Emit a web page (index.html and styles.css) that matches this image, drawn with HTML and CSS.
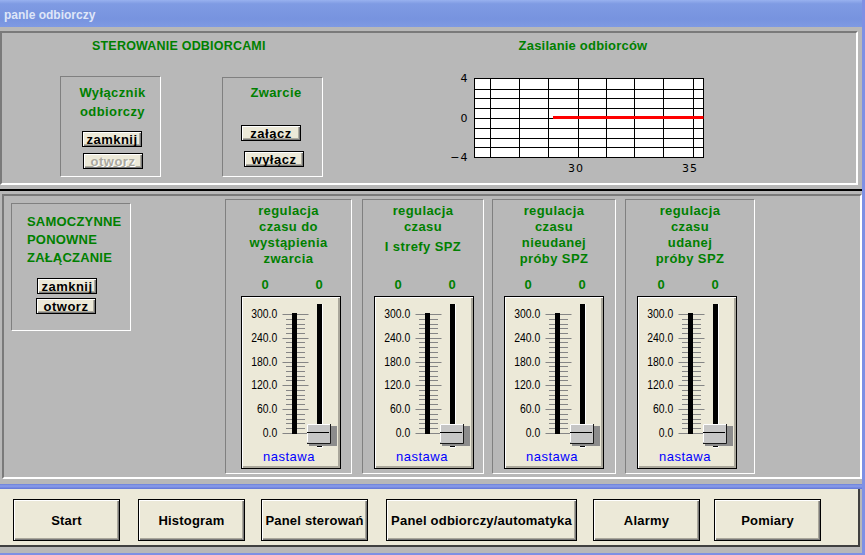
FILE: index.html
```html
<!DOCTYPE html>
<html lang="pl">
<head>
<meta charset="utf-8">
<title>panle odbiorczy</title>
<link rel="stylesheet" href="styles.css">
</head>
<body>
<svg class="defs" width="0" height="0" aria-hidden="true">
  <symbol id="scale" viewBox="0 0 62 152">
    <path d="M4.5 17.5H30.5M4.5 41.5H30.5M4.5 65.5H30.5M4.5 88.5H30.5M4.5 112.5H30.5M4.5 136.5H30.5" stroke="#858585" fill="none"/>
    <path d="M8 22.5H27M8 27.5H27M8 31.5H27M8 36.5H27M8 45.5H27M8 50.5H27M8 55.5H27M8 60.5H27M8 69.5H27M8 74.5H27M8 79.5H27M8 83.5H27M8 93.5H27M8 98.5H27M8 102.5H27M8 107.5H27M8 117.5H27M8 122.5H27M8 126.5H27M8 131.5H27" stroke="#858585" fill="none"/>
    <rect x="14" y="16" width="5" height="121" fill="#000"/>
    <rect x="39" y="7" width="5" height="143" fill="#000"/>
    <path d="M44.5 7V150.5H39" stroke="#fff" fill="none"/>
    <rect x="31" y="129" width="28" height="20" fill="#8c8c8c"/>
    <rect x="29" y="127" width="24" height="19" fill="#c6c6c6"/>
    <path d="M29.5 145V127.5H52" stroke="#fff" fill="none"/>
    <path d="M52.5 127V146.5H29" stroke="#1a1a1a" fill="none"/>
    <path d="M29 135.5H51" stroke="#000" fill="none"/>
  </symbol>
</svg>
<div class="window">
  <div class="titlebar">panle odbiorczy</div>

  <section class="panel panel-top">
    <div class="ctrl-area">
      <h1 class="heading">STEROWANIE ODBIORCAMI</h1>
      <div class="ctrl-boxes">
        <div class="group group-switch">
          <div class="label">Wyłącznik<br>odbiorczy</div>
          <button class="sbtn b-zamknij" type="button">zamknij</button>
          <button class="sbtn b-otworz" type="button" disabled>otworz</button>
        </div>
        <div class="group group-short">
          <div class="label">Zwarcie</div>
          <button class="sbtn b-zalacz" type="button">załącz</button>
          <button class="sbtn b-wylacz" type="button">wyłącz</button>
        </div>
      </div>
    </div>
    <div class="chart-area">
      <h2 class="chart-title">Zasilanie odbiorców</h2>
      <svg class="chart" width="270" height="110" viewBox="0 0 270 110">
        <rect x="24.5" y="10.5" width="229" height="79" fill="#fff" stroke="#000"/>
        <path d="M40.5 10.5V89.5M69.5 10.5V89.5M98.5 10.5V89.5M128.5 10.5V89.5M156.5 10.5V89.5M184.5 10.5V89.5M213.5 10.5V89.5M243.5 10.5V89.5" stroke="#000" fill="none"/>
        <path d="M24.5 21.5H253.5M24.5 30.5H253.5M24.5 40.5H253.5M24.5 50.5H253.5M24.5 60.5H253.5M24.5 70.5H253.5M24.5 79.5H253.5" stroke="#000" fill="none"/>
        <rect x="103" y="48" width="150.5" height="3" fill="#ff0000"/>
        <g class="axis">
          <text x="18.5" y="14" text-anchor="end">4</text>
          <text x="18.5" y="54" text-anchor="end">0</text>
          <text x="18.5" y="93" text-anchor="end">−4</text>
          <text x="126" y="104" text-anchor="middle">30</text>
          <text x="240" y="104" text-anchor="middle">35</text>
        </g>
      </svg>
    </div>
  </section>

  <div class="divider"></div>

  <section class="panel panel-bottom">
    <div class="group group-spz">
      <div class="label spz-label">SAMOCZYNNE<br>PONOWNE<br>ZAŁĄCZANIE</div>
      <button class="sbtn b-spz-zamknij" type="button">zamknij</button>
      <button class="sbtn b-spz-otworz" type="button">otworz</button>
    </div>

    <div class="sgroup">
      <div class="stitle"><span>regulacja</span><span>czasu do</span><span>wystąpienia</span><span>zwarcia</span></div>
      <div class="slider">
        <div class="readouts"><span>0</span><span>0</span></div>
        <div class="frame">
          <div class="scale-labels"><span>300.0</span><span>240.0</span><span>180.0</span><span>120.0</span><span>60.0</span><span>0.0</span></div>
          <svg class="scale" width="62" height="152"><use href="#scale"/></svg>
          <div class="nastawa">nastawa</div>
        </div>
      </div>
    </div>

    <div class="sgroup">
      <div class="stitle"><span>regulacja</span><span>czasu</span><span class="ln-gap">I strefy SPZ</span></div>
      <div class="slider">
        <div class="readouts"><span>0</span><span>0</span></div>
        <div class="frame">
          <div class="scale-labels"><span>300.0</span><span>240.0</span><span>180.0</span><span>120.0</span><span>60.0</span><span>0.0</span></div>
          <svg class="scale" width="62" height="152"><use href="#scale"/></svg>
          <div class="nastawa">nastawa</div>
        </div>
      </div>
    </div>

    <div class="sgroup">
      <div class="stitle"><span>regulacja</span><span>czasu</span><span>nieudanej</span><span>próby SPZ</span></div>
      <div class="slider">
        <div class="readouts"><span>0</span><span>0</span></div>
        <div class="frame">
          <div class="scale-labels"><span>300.0</span><span>240.0</span><span>180.0</span><span>120.0</span><span>60.0</span><span>0.0</span></div>
          <svg class="scale" width="62" height="152"><use href="#scale"/></svg>
          <div class="nastawa">nastawa</div>
        </div>
      </div>
    </div>

    <div class="sgroup">
      <div class="stitle"><span>regulacja</span><span>czasu</span><span>udanej</span><span>próby SPZ</span></div>
      <div class="slider">
        <div class="readouts"><span>0</span><span>0</span></div>
        <div class="frame">
          <div class="scale-labels"><span>300.0</span><span>240.0</span><span>180.0</span><span>120.0</span><span>60.0</span><span>0.0</span></div>
          <svg class="scale" width="62" height="152"><use href="#scale"/></svg>
          <div class="nastawa">nastawa</div>
        </div>
      </div>
    </div>
  </section>

  <div class="stripe"></div>

  <nav class="buttonbar">
    <button class="bbtn" type="button">Start</button>
    <button class="bbtn" type="button">Histogram</button>
    <button class="bbtn" type="button">Panel sterowań</button>
    <button class="bbtn bbtn-wide" type="button">Panel odbiorczy/automatyka</button>
    <button class="bbtn" type="button">Alarmy</button>
    <button class="bbtn" type="button">Pomiary</button>
  </nav>
</div>
</body>
</html>
```

FILE: styles.css
```css
* {
  box-sizing: border-box;
}

html,
body {
  margin: 0;
  padding: 0;
}

body {
  width: 865px;
  height: 555px;
  overflow: hidden;
  background: #b8b8b8;
  font-family: "Liberation Sans", Arial, sans-serif;
}

.defs {
  position: absolute;
  width: 0;
  height: 0;
  overflow: hidden;
}

.window {
  width: 865px;
  height: 555px;
  display: flex;
  flex-direction: column;
  background: #b8b8b8;
  border-right: 3px solid #7e90e4;
  border-bottom: 2px solid #7e90e4;
}

.titlebar {
  flex: none;
  height: 27px;
  padding: 8px 0 0 4px;
  font-size: 12px;
  line-height: 14px;
  font-weight: bold;
  color: #dfe6f8;
  background: linear-gradient(to bottom, #98b1ef 0, #7f9be3 14%, #7793df 70%, #7f9ae3 100%);
}

/* sunken groove panels */
.panel {
  flex: none;
  border-style: solid;
  border-width: 2px;
  border-color: #7a7a7a #ffffff #ffffff #7a7a7a;
}

.panel-top {
  margin-top: 4px;
  width: 858px;
  height: 154px;
  display: flex;
}

.ctrl-area {
  width: 440px;
  flex: none;
}

.heading {
  margin: 0;
  padding: 6px 0 0 90px;
  font-size: 12.5px;
  line-height: 14px;
  letter-spacing: 0.2px;
  font-weight: bold;
  color: #008000;
}

.ctrl-boxes {
  display: flex;
  align-items: flex-start;
  margin-top: 23px;
}

.group {
  flex: none;
  display: flex;
  flex-direction: column;
  align-items: flex-start;
  border: 1px solid;
  border-color: #808080 #ffffff #ffffff #808080;
}

.label {
  width: 100%;
  color: #008000;
  font-weight: bold;
  font-size: 13px;
  line-height: 19px;
  letter-spacing: 0.4px;
  text-align: center;
}

.group-switch {
  margin-left: 58px;
  width: 101px;
  height: 101px;
}

.group-switch .label {
  margin-top: 6px;
  padding-left: 4px;
}

.group-short {
  margin-left: 61px;
  margin-top: 1px;
  width: 101px;
  height: 100px;
}

.group-short .label {
  margin-top: 5px;
  padding-left: 7px;
}

/* small push buttons */
.sbtn {
  appearance: none;
  flex: none;
  width: 60px;
  height: 16px;
  padding: 0;
  border: 1px solid #000;
  background: #ece9d8;
  box-shadow: inset 1px 1px 0 #ffffff, inset -1px -1px 0 #7a7a7a, inset -2px -2px 0 #b0ad9f;
  font-family: "Liberation Sans", Arial, sans-serif;
  font-weight: bold;
  font-size: 13px;
  line-height: 13px;
  letter-spacing: 0.5px;
  color: #000;
  white-space: nowrap;
}

.sbtn:disabled {
  color: #a9a79e;
  text-shadow: 1px 1px 0 #ffffff;
}

.b-zamknij {
  margin: 10px 0 0 21px;
}

.b-otworz {
  margin: 6px 0 0 22px;
}

.b-zalacz {
  margin: 23px 0 0 18px;
}

.b-wylacz {
  margin: 10px 0 0 21px;
}

/* chart */
.chart-area {
  width: 282px;
  flex: none;
}

.chart-title {
  margin: 0;
  padding-top: 6px;
  font-size: 13px;
  line-height: 14px;
  letter-spacing: 0.2px;
  font-weight: bold;
  color: #008000;
  text-align: center;
}

.chart {
  display: block;
  margin: 15px 0 0 8px;
}

.axis text {
  font-family: "DejaVu Sans", sans-serif;
  font-size: 11px;
  letter-spacing: 1px;
  fill: #000;
}

.divider {
  flex: none;
  margin-top: 4px;
  height: 2px;
  background: #000;
}

/* bottom panel */
.panel-bottom {
  margin-top: 3px;
  margin-left: 2px;
  width: 860px;
  height: 285px;
  display: flex;
  align-items: flex-start;
  padding-top: 3px;
}

.group-spz {
  margin: 4px 0 0 7px;
  width: 120px;
  height: 128px;
}

.spz-label {
  margin-top: 9px;
  padding-left: 15px;
  text-align: left;
  font-size: 13px;
  line-height: 18px;
  letter-spacing: 0.2px;
}

.b-spz-zamknij {
  margin: 11px 0 0 25px;
}

.b-spz-otworz {
  margin: 4px 0 0 24px;
}

.sgroup {
  flex: none;
  height: 275px;
  border: 1px solid;
  border-color: #808080 #ffffff #ffffff #808080;
}

.sgroup:nth-of-type(2) {
  margin-left: 94px;
  width: 127px;
}

.sgroup:nth-of-type(3) {
  margin-left: 10px;
  width: 122px;
}

.sgroup:nth-of-type(4) {
  margin-left: 8px;
  width: 124px;
}

.sgroup:nth-of-type(5) {
  margin-left: 9px;
  width: 130px;
}

.stitle {
  height: 77px;
  padding-top: 3px;
  color: #008000;
  font-weight: bold;
  font-size: 13px;
  line-height: 16px;
  letter-spacing: 0.4px;
  text-align: center;
}

.stitle span {
  display: block;
}

.stitle .ln-gap {
  margin-top: 4px;
}

.slider {
  margin-left: 11px;
}

.sgroup:nth-of-type(2) .slider {
  margin-left: 15px;
}

.readouts {
  display: flex;
  height: 16px;
  color: #008000;
  font-weight: bold;
  font-size: 13px;
  line-height: 16px;
}

.readouts span {
  width: 48px;
  text-align: center;
}

.readouts span + span {
  margin-left: 6px;
}

.frame {
  margin-top: 3px;
  width: 100px;
  height: 173px;
  border: 1px solid #000;
  background: #ece9d8;
  box-shadow: inset 1px 1px 0 #ffffff, inset -2px -2px 0 #aaa79b;
  display: grid;
  grid-template-columns: 36px 62px;
  grid-template-rows: 152px 16px;
}

.scale-labels {
  display: flex;
  flex-direction: column;
  align-items: flex-end;
  padding-top: 5.1px;
  padding-right: 1px;
  font-size: 13px;
  line-height: 23.8px;
  color: #000;
  transform: scaleX(0.8);
  transform-origin: right center;
}

.scale {
  display: block;
}

.nastawa {
  grid-column: 1 / span 2;
  padding-right: 4px;
  text-align: center;
  color: #0000ff;
  font-size: 13px;
  line-height: 16px;
  letter-spacing: 0.5px;
}

/* bottom strip and button bar */
.stripe {
  flex: none;
  height: 10px;
  background: linear-gradient(to bottom, #b8b8b8 0, #b8b8b8 5px, #6b80da 5px, #8b9ee9 7px, #7e91e4 8px, #6276d4 10px);
}

.buttonbar {
  flex: none;
  width: 860px;
  height: 58px;
  display: flex;
  align-items: flex-start;
  padding: 10px 0 0 13px;
  background: #ece9d8;
  border-bottom: 2px solid #404040;
  border-right: 2px solid #404040;
}

.bbtn {
  appearance: none;
  flex: none;
  width: 107px;
  height: 42px;
  padding: 0;
  border: 1px solid #000;
  background: #ece9d8;
  box-shadow: inset 1px 1px 0 #ffffff, inset -1px -1px 0 #7a7a7a, inset -2px -2px 0 #aaa79b;
  font-family: "Liberation Sans", Arial, sans-serif;
  font-weight: bold;
  font-size: 13px;
  letter-spacing: 0.2px;
  color: #000;
  white-space: nowrap;
  overflow: hidden;
}

.bbtn-wide {
  width: 191px;
}

.bbtn:nth-child(2) {
  margin-left: 18px;
}

.bbtn:nth-child(3) {
  margin-left: 16px;
}

.bbtn:nth-child(4) {
  margin-left: 18px;
}

.bbtn:nth-child(5) {
  margin-left: 16px;
}

.bbtn:nth-child(6) {
  margin-left: 14px;
}
```
